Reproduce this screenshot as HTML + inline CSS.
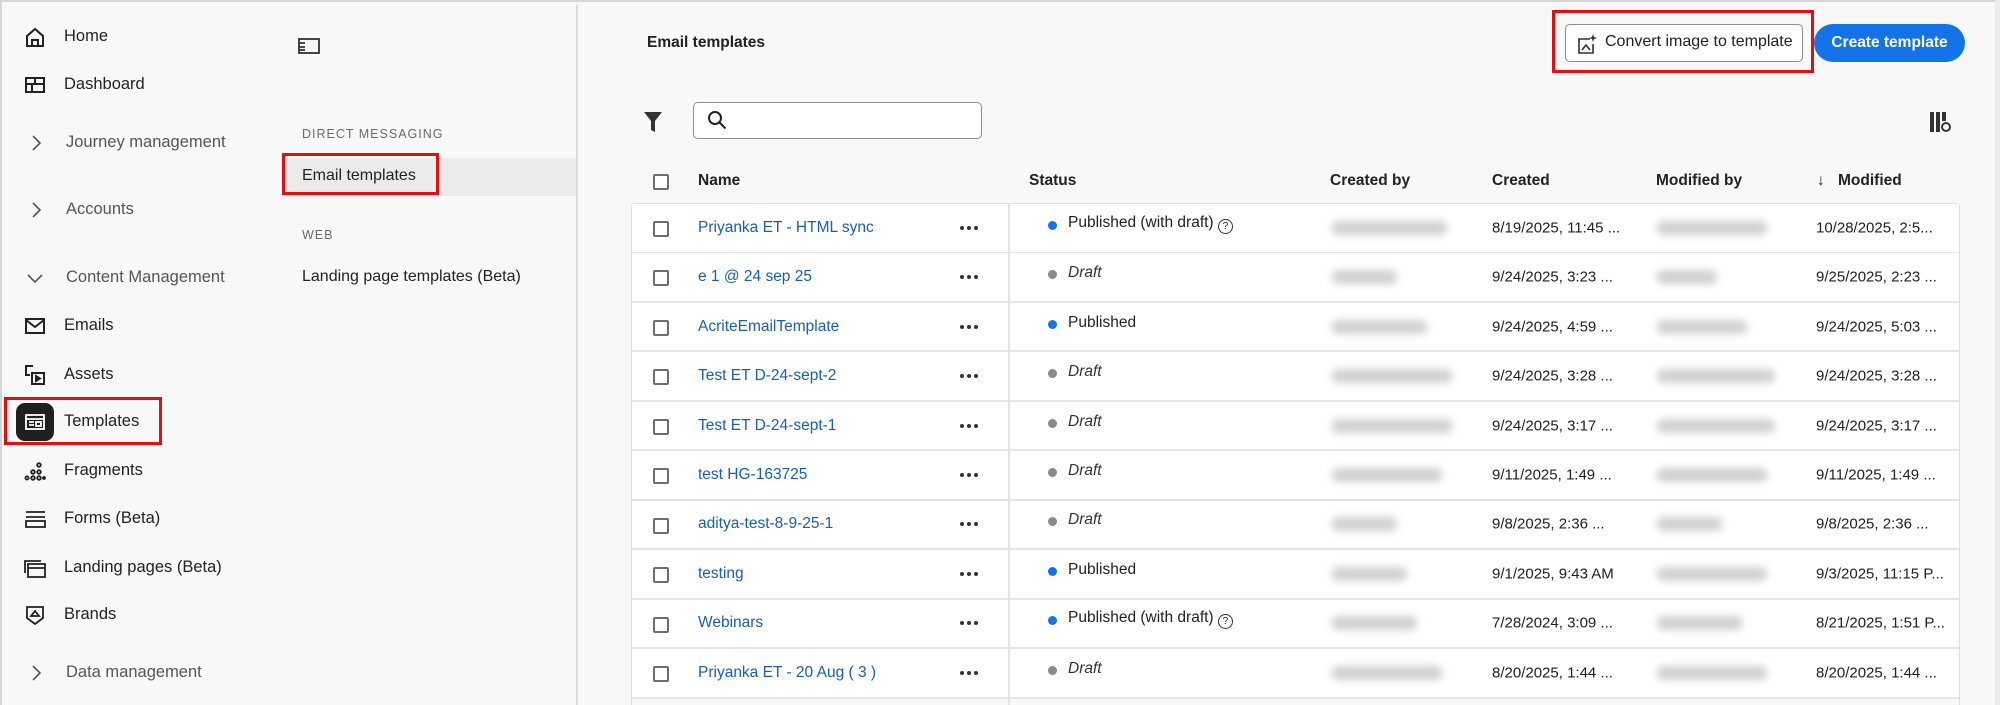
<!DOCTYPE html>
<html><head><meta charset="utf-8"><style>
*{box-sizing:border-box;margin:0;padding:0}
body{width:2000px;height:705px;overflow:hidden;background:#f8f8f8;font-family:"Liberation Sans",sans-serif;color:#222;position:relative}
.a{position:absolute;white-space:nowrap}
.nav{font-size:16.5px;color:#222}
.grp{font-size:16.5px;color:#555}
.ic{position:absolute;width:22px;height:22px}
.cb{position:absolute;width:16px;height:16px;border:2px solid #6e6e6e;border-radius:2px;background:#fff}
.row{position:absolute;left:632px;width:1327px;height:49.5px;background:#fff;border-bottom:2px solid #e6e6e6}
.t{position:absolute;top:50%;transform:translateY(-50%);white-space:nowrap;font-size:15.5px}
.lnk{color:#1a5fb4}
.blur{position:absolute;top:50%;transform:translateY(-50%);height:14px;background:#bdbdbd;filter:blur(4px);border-radius:6px;opacity:.7}
.dot{position:absolute;top:50%;width:9px;height:9px;border-radius:50%;margin-top:-7px}
.dots{position:absolute;left:328px;top:50%;margin-top:-2px;width:20px;height:4px}
.dots i{position:absolute;top:0;width:4px;height:4px;border-radius:50%;background:#333}
.hd{position:absolute;top:172px;font-size:15.5px;font-weight:bold;color:#222}
</style></head><body>
<div class="a" style="left:0;top:0;width:2000px;height:2px;background:#d6d6d6"></div>
<div class="a" style="left:0;top:0;width:2px;height:705px;background:#d6d6d6"></div>
<!-- left nav -->
<svg class="ic" style="left:24px;top:26px" viewBox="0 0 22 22" fill="none" stroke="#222" stroke-width="2"><path d="M3 10L11 3l8 7v10H3z"/><path d="M8 20v-6h6v6"/></svg>
<div class="a nav" style="left:64px;top:27px">Home</div>
<svg class="ic" style="left:24px;top:74px" viewBox="0 0 22 22" fill="none" stroke="#222" stroke-width="2"><rect x="2" y="4" width="18" height="14"/><path d="M2 10h18M11 4v6M8 10v8"/></svg>
<div class="a nav" style="left:64px;top:75px">Dashboard</div>
<svg class="ic" style="left:25px;top:132px" viewBox="0 0 22 22" fill="none" stroke="#555" stroke-width="1.6"><path d="M8 4l7 7-7 7"/></svg>
<div class="a grp" style="left:66px;top:133px">Journey management</div>
<svg class="ic" style="left:25px;top:199px" viewBox="0 0 22 22" fill="none" stroke="#555" stroke-width="1.6"><path d="M8 4l7 7-7 7"/></svg>
<div class="a grp" style="left:66px;top:200px">Accounts</div>
<svg class="ic" style="left:24px;top:267px" viewBox="0 0 22 22" fill="none" stroke="#555" stroke-width="1.6"><path d="M4 8l7 7 7-7"/></svg>
<div class="a grp" style="left:66px;top:268px">Content Management</div>
<svg class="ic" style="left:24px;top:315px" viewBox="0 0 22 22" fill="none" stroke="#222" stroke-width="2"><rect x="2" y="4" width="18" height="14"/><path d="M2 5l9 7 9-7"/></svg>
<div class="a nav" style="left:64px;top:316px">Emails</div>
<svg class="ic" style="left:24px;top:364px" viewBox="0 0 22 22" fill="none" stroke="#222" stroke-width="2"><path d="M9 2H2v9h4"/><rect x="8" y="9" width="12" height="11"/><path d="M12 12v5l4-2.5z" fill="#222"/></svg>
<div class="a nav" style="left:64px;top:365px">Assets</div>
<div class="a" style="left:16px;top:403px;width:38px;height:38px;background:#1f1f1f;border-radius:9px"></div>
<svg class="ic" style="left:24px;top:411px" viewBox="0 0 22 22" fill="none" stroke="#fff" stroke-width="1.8"><rect x="2" y="4" width="18" height="14"/><path d="M2 8h18M5 11h5M5 14h5"/><rect x="12" y="11" width="5" height="4"/></svg>
<div class="a nav" style="left:64px;top:412px">Templates</div>
<div class="a" style="left:4px;top:397px;width:158px;height:48px;border:3px solid #e01010"></div>
<svg class="ic" style="left:24px;top:460px" viewBox="0 0 22 22" fill="none" stroke="#222" stroke-width="1.8"><circle cx="3" cy="18" r="1.6"/><circle cx="9" cy="18" r="1.8"/><circle cx="15" cy="18" r="1.8"/><circle cx="9" cy="12" r="1.8"/><circle cx="15" cy="12" r="1.8"/><circle cx="15" cy="5" r="1.8"/><circle cx="20" cy="18" r="1"/></svg>
<div class="a nav" style="left:64px;top:461px">Fragments</div>
<svg class="ic" style="left:24px;top:508px" viewBox="0 0 22 22" fill="none" stroke="#222" stroke-width="1.8"><path d="M2 4h19M2 9h19"/><rect x="2" y="13" width="19" height="6"/></svg>
<div class="a nav" style="left:64px;top:509px">Forms (Beta)</div>
<svg class="ic" style="left:24px;top:557px" viewBox="0 0 22 22" fill="none" stroke="#222" stroke-width="1.8"><path d="M1 16V4h16"/><rect x="4" y="7" width="17" height="13"/><path d="M4 11h17"/></svg>
<div class="a nav" style="left:64px;top:558px">Landing pages (Beta)</div>
<svg class="ic" style="left:24px;top:604px" viewBox="0 0 22 22" fill="none" stroke="#222" stroke-width="1.8"><path d="M3 3h16v11l-8 6-8-6z"/><path d="M7 12l4-5 4 5z"/></svg>
<div class="a nav" style="left:64px;top:605px">Brands</div>
<svg class="ic" style="left:25px;top:662px" viewBox="0 0 22 22" fill="none" stroke="#555" stroke-width="1.6"><path d="M8 4l7 7-7 7"/></svg>
<div class="a grp" style="left:66px;top:663px">Data management</div>
<!-- second panel -->
<svg class="a" style="left:298px;top:38px" width="22" height="16" viewBox="0 0 22 16" fill="none" stroke="#333" stroke-width="1.8"><rect x="1" y="1" width="20" height="14"/><path d="M1 5h6M1 9h6M1 12h6"/></svg>
<div class="a" style="left:302px;top:127px;font-size:12.5px;letter-spacing:1px;color:#6a6a6a">DIRECT MESSAGING</div>
<div class="a" style="left:283px;top:158px;width:294px;height:38px;background:#ebebeb"></div>
<div class="a" style="left:302px;top:167px;font-size:16px;color:#222">Email templates</div>
<div class="a" style="left:282px;top:153px;width:157px;height:42px;border:3px solid #e01010"></div>
<div class="a" style="left:302px;top:228px;font-size:12.5px;letter-spacing:1px;color:#6a6a6a">WEB</div>
<div class="a" style="left:302px;top:268px;font-size:16px;color:#222">Landing page templates (Beta)</div>
<div class="a" style="left:576px;top:5px;width:2px;height:700px;background:#dcdcdc"></div>
<!-- main header -->
<div class="a" style="left:647px;top:34px;font-size:15.5px;font-weight:bold;color:#222">Email templates</div>
<div class="a" style="left:1552px;top:10px;width:262px;height:63px;border:3px solid #e01010"></div>
<div class="a" style="left:1565px;top:24px;width:238px;height:38px;border:1.5px solid #8e8e8e;border-radius:5px;background:#fff"></div>
<svg class="a" style="left:1576px;top:33px" width="22" height="22" viewBox="0 0 22 22" fill="none" stroke="#333" stroke-width="1.6"><path d="M14 6H3v14h14V11"/><path d="M6 17l4-5 4 5"/><path d="M17 1l1 3 3 1-3 1-1 3-1-3-3-1 3-1z" fill="#333" stroke="none"/></svg>
<div class="a" style="left:1605px;top:33px;font-size:16px;color:#222">Convert image to template</div>
<div class="a" style="left:1814px;top:24px;width:151px;height:38px;border-radius:19px;background:#1473e6;color:#fff;font-weight:bold;font-size:15.5px;text-align:center;line-height:38px">Create template</div>
<svg class="a" style="left:643px;top:111px" width="20" height="22" viewBox="0 0 20 22"><path d="M1 1h18l-7 9v11l-4-2v-9z" fill="#333"/></svg>
<div class="a" style="left:693px;top:102px;width:289px;height:37px;border:1.5px solid #909090;border-radius:5px;background:#fff"></div>
<svg class="a" style="left:707px;top:110px" width="20" height="20" viewBox="0 0 20 20" fill="none" stroke="#222" stroke-width="2"><circle cx="8" cy="8" r="6"/><path d="M12.5 12.5l6 6"/></svg>
<svg class="a" style="left:1930px;top:111px" width="22" height="22" viewBox="0 0 22 22"><rect x="0" y="1" width="4" height="20" fill="#333"/><rect x="6" y="1" width="4" height="20" fill="#333"/><rect x="12" y="1" width="4" height="9" fill="#333"/><circle cx="16" cy="16" r="4" fill="none" stroke="#333" stroke-width="2"/></svg>
<div class="a" style="left:1995px;top:0;width:5px;height:705px;background:#ececec"></div>
<!-- headers -->
<div class="cb" style="left:653px;top:174px"></div>
<div class="hd" style="left:698px">Name</div>
<div class="hd" style="left:1029px">Status</div>
<div class="hd" style="left:1330px">Created by</div>
<div class="hd" style="left:1492px">Created</div>
<div class="hd" style="left:1656px">Modified by</div>
<div class="hd" style="left:1817px;font-weight:normal">&#8595;</div>
<div class="hd" style="left:1838px">Modified</div>
<div class="a" style="left:631px;top:203px;width:1329px;height:502px;border:1px solid #e0e0e0;border-bottom:none;border-radius:4px 4px 0 0"></div>
<div id="rows"></div>
<div class="a" style="left:1008px;top:204px;width:2px;height:501px;background:#e3e3e3"></div>
<script>
var d=[["Priyanka ET - HTML sync","p","Published (with draft)",1,115,"8/19/2025, 11:45 ...",110,"10/28/2025, 2:5..."],
["e 1 @ 24 sep 25","d","Draft",0,65,"9/24/2025, 3:23 ...",60,"9/25/2025, 2:23 ..."],
["AcriteEmailTemplate","p","Published",0,95,"9/24/2025, 4:59 ...",90,"9/24/2025, 5:03 ..."],
["Test ET D-24-sept-2","d","Draft",0,120,"9/24/2025, 3:28 ...",118,"9/24/2025, 3:28 ..."],
["Test ET D-24-sept-1","d","Draft",0,120,"9/24/2025, 3:17 ...",118,"9/24/2025, 3:17 ..."],
["test HG-163725","d","Draft",0,110,"9/11/2025, 1:49 ...",110,"9/11/2025, 1:49 ..."],
["aditya-test-8-9-25-1","d","Draft",0,65,"9/8/2025, 2:36 ...",65,"9/8/2025, 2:36 ..."],
["testing","p","Published",0,75,"9/1/2025, 9:43 AM",110,"9/3/2025, 11:15 P..."],
["Webinars","p","Published (with draft)",1,85,"7/28/2024, 3:09 ...",85,"8/21/2025, 1:51 P..."],
["Priyanka ET - 20 Aug ( 3 )","d","Draft",0,110,"8/20/2025, 1:44 ...",110,"8/20/2025, 1:44 ..."]];
var h="";
d.forEach(function(r,i){var top=204+i*49.45;var pub=r[1]=="p";
h+='<div class="row" style="top:'+top+'px">'+
'<div class="cb" style="left:21px;top:17px"></div>'+
'<div class="t lnk" style="left:66px">'+r[0]+'</div>'+
'<div class="dots"><i style="left:0"></i><i style="left:7px"></i><i style="left:14px"></i></div>'+
'<div class="dot" style="left:416px;background:'+(pub?'#1473e6':'#8a8a8a')+'"></div>'+
'<div class="t" style="left:436px;margin-top:-4px;'+(pub?'':'font-style:italic;color:#333')+'">'+r[2]+(r[3]?' <span style="display:inline-block;width:15px;height:15px;border:1.5px solid #333;border-radius:50%;font-size:10px;text-align:center;line-height:13px;font-style:normal;vertical-align:-2px">?</span>':'')+'</div>'+
'<div class="blur" style="left:700px;width:'+r[4]+'px"></div>'+
'<div class="t" style="left:860px;font-size:15px">'+r[5]+'</div>'+
'<div class="blur" style="left:1025px;width:'+r[6]+'px"></div>'+
'<div class="t" style="left:1184px;font-size:15px">'+r[7]+'</div></div>';});
document.getElementById("rows").innerHTML=h;
</script>
</body></html>
